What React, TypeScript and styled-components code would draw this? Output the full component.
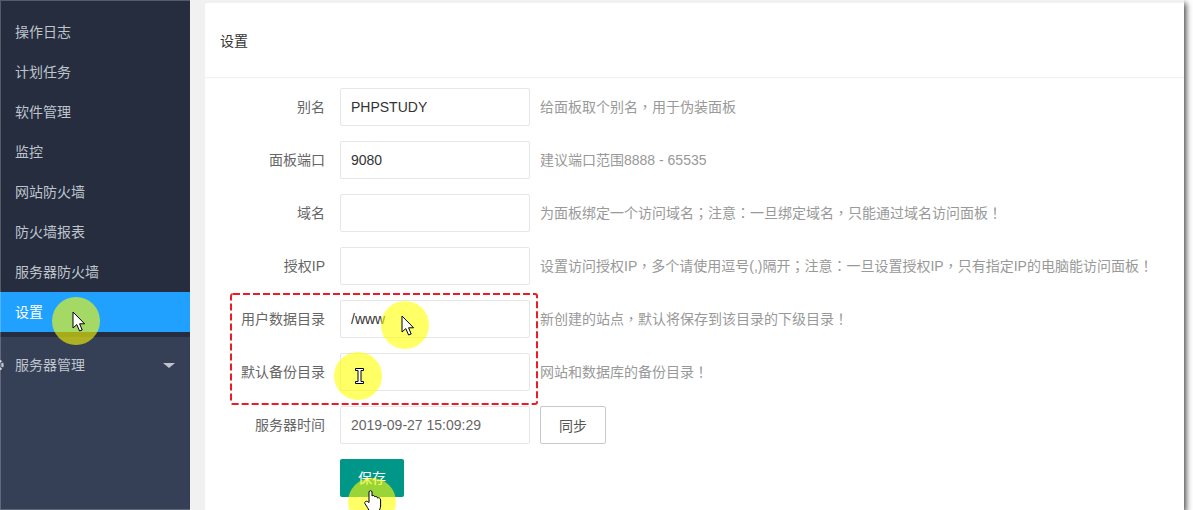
import React from "react";
import styled, { createGlobalStyle } from "styled-components";

const GlobalStyle = createGlobalStyle`
  html, body {
    margin: 0;
    padding: 0;
    background: #fff;
    overflow: hidden;
  }
  * { box-sizing: border-box; }
`;

const navItems = ["操作日志", "计划任务", "软件管理", "监控", "网站防火墙", "防火墙报表", "服务器防火墙"];

const rows = [
  { label: "别名", value: "PHPSTUDY", help: "给面板取个别名，用于伪装面板" },
  { label: "面板端口", value: "9080", help: "建议端口范围8888 - 65535" },
  { label: "域名", value: "", help: "为面板绑定一个访问域名；注意：一旦绑定域名，只能通过域名访问面板！" },
  { label: "授权IP", value: "", help: "设置访问授权IP，多个请使用逗号(,)隔开；注意：一旦设置授权IP，只有指定IP的电脑能访问面板！" },
  { label: "用户数据目录", value: "/www", help: "新创建的站点，默认将保存到该目录的下级目录！" },
  { label: "默认备份目录", value: "", help: "网站和数据库的备份目录！" },
];

// the reference centres its full-width punctuation, which the TC face does too
const renderHelp = (text: string) =>
  text.split(/([，；：！])/).map((part, i) =>
    i % 2 === 1 ? <Punct key={i}>{part}</Punct> : part
  );

const arrowPath = "M1 1 L1 17 L4.8 13.6 L7.6 20 L10.2 19 L7.6 12.8 L12.6 12.8 Z";

const App = () => {
  return (
    <>
      <GlobalStyle />
      <Viewport>
        <Frame>
          <Sidebar>
            <NavList>
              {navItems.map((item) => (
                <NavItem key={item}>{item}</NavItem>
              ))}
              <NavItem $active>设置</NavItem>
            </NavList>
            <SubMenu>
              <SubIcon viewBox="0 0 14 14">
                <circle cx="7" cy="7" r="4.5" fill="none" stroke="#bfc4cc" strokeWidth="2.4" strokeDasharray="2 1.2" />
              </SubIcon>
              <SubTitle>服务器管理</SubTitle>
              <Caret />
            </SubMenu>
          </Sidebar>
          <Content>
            <Card>
              <CardHeader>设置</CardHeader>
              <Form>
                {rows.map((row) => (
                  <Row key={row.label}>
                    <Label>{row.label}</Label>
                    <Input readOnly value={row.value} />
                    <Help>{renderHelp(row.help)}</Help>
                  </Row>
                ))}
                <Row>
                  <Label>服务器时间</Label>
                  <Input readOnly value="2019-09-27 15:09:29" $muted />
                  <SyncButton>同步</SyncButton>
                </Row>
                <Row>
                  <Label />
                  <SaveButton>保存</SaveButton>
                </Row>
              </Form>
            </Card>
          </Content>
        </Frame>

        <DashedBox width="309" height="113" viewBox="0 0 309 113">
          <rect x="1" y="1" width="306" height="110" rx="2" fill="none" stroke="#ed1c24" strokeWidth="2" strokeDasharray="7 3" />
        </DashedBox>

        <Spot $x={76} $y={321} />
        <Spot $x={405} $y={325} />
        <Spot $x={358} $y={376} />
        <Spot $x={372} $y={502} />

        <Cursor $x={72} $y={311} width="14" height="22" viewBox="0 0 14 22">
          <path d={arrowPath} fill="#fff" stroke="#000" strokeWidth="1" strokeLinejoin="round" />
        </Cursor>
        <Cursor $x={401} $y={315} width="14" height="22" viewBox="0 0 14 22">
          <path d={arrowPath} fill="#fff" stroke="#000" strokeWidth="1" strokeLinejoin="round" />
        </Cursor>
        <Cursor $x={354} $y={367} width="11" height="18" viewBox="0 0 11 18">
          <path d="M1.5 1.5 H9.5 V3.5 H7 V14.5 H9.5 V16.5 H1.5 V14.5 H4 V3.5 H1.5 Z" fill="#fff" stroke="#000" strokeWidth="1" />
        </Cursor>
        <Cursor $x={364} $y={490} width="18" height="20" viewBox="0 0 18 20">
          <path d="M5 10 V2 C5 .3 8 .3 8 2 V6 C9 5 10.5 5.5 10.8 6.8 C11.8 6 13.3 6.5 13.5 8 C14.6 7.4 16.6 8 16.6 10 V16 C16.6 18 15.5 20 14.5 22 H6 C4.5 19 2.5 16 .9 13.5 C.1 11.8 2.5 10 5 12.5 Z" fill="#fff" stroke="#000" strokeWidth="1" />
        </Cursor>
      </Viewport>
    </>
  );
};

export default App;

const Viewport = styled.div`
  position: relative;
  width: 1193px;
  height: 510px;
  overflow: hidden;
  background: #fff;
  font-family: "Liberation Sans", "Noto Sans CJK SC", sans-serif;
`;

const Frame = styled.div`
  display: flex;
  width: 1184px;
  height: 510px;
  background: #f1f1f1;
  box-shadow: 2px 3px 6px rgba(0, 0, 0, 0.75);
`;

const Sidebar = styled.aside`
  position: relative;
  display: flex;
  flex-direction: column;
  flex: none;
  width: 190px;
  background: #353f56;

  &::after {
    content: "";
    position: absolute;
    inset: 0;
    border: solid rgba(255, 255, 255, 0.22);
    border-width: 1px 0 1px 1px;
    pointer-events: none;
  }
`;

const NavList = styled.ul`
  list-style: none;
  margin: 0;
  padding: 12px 0 5px;
  background: #252d3f;
`;

const NavItem = styled.li<{ $active?: boolean }>`
  height: 40px;
  padding-left: 15px;
  line-height: 40px;
  font-size: 14px;
  color: ${({ $active }) => ($active ? "#fff" : "#bfc4cc")};
  background: ${({ $active }) => ($active ? "#20a0ff" : "transparent")};
`;

const SubMenu = styled.div`
  display: flex;
  align-items: center;
  height: 56px;
  margin-left: -9px;
  padding-right: 15px;
  font-size: 14px;
  color: #bfc4cc;
`;

const SubIcon = styled.svg`
  flex: none;
  width: 14px;
  height: 14px;
  margin-right: 10px;
`;

const SubTitle = styled.span`
  flex: 1;
  padding-bottom: 2px;
`;

const Caret = styled.i`
  width: 0;
  height: 0;
  border-left: 6px solid transparent;
  border-right: 6px solid transparent;
  border-top: 5px solid #bfc4cc;
`;

const Content = styled.main`
  flex: 1;
  min-width: 0;
  padding: 3px 0 0 15px;
`;

const Card = styled.section`
  height: 100%;
  background: #fff;
  border-radius: 2px 0 0 0;
`;

const CardHeader = styled.header`
  height: 75px;
  padding-left: 15px;
  line-height: 76px;
  font-size: 14px;
  color: #333;
  border-bottom: 1px solid #f1f1f1;
`;

const Form = styled.form`
  display: flex;
  flex-direction: column;
  gap: 15px;
  padding-top: 10px;
`;

const Row = styled.div`
  display: flex;
  align-items: center;
  height: 38px;
  font-size: 14px;
`;

const Label = styled.label`
  flex: none;
  width: 120px;
  padding-bottom: 2px;
  text-align: right;
  color: #666;
`;

const Input = styled.input<{ $muted?: boolean }>`
  flex: none;
  width: 190px;
  height: 38px;
  margin-left: 15px;
  padding: 0 10px;
  border: 1px solid #e6e6e6;
  border-radius: 2px;
  outline: none;
  font: inherit;
  color: ${({ $muted }) => ($muted ? "#666" : "#333")};
  background: #fff;
`;

const Help = styled.span`
  margin-left: 10px;
  padding-bottom: 2px;
  color: #999;
  white-space: nowrap;
`;

const Punct = styled.span`
  font-family: "Noto Sans CJK TC", sans-serif;
`;

const SyncButton = styled.button`
  width: 66px;
  height: 38px;
  margin-left: 10px;
  padding: 0;
  border: 1px solid #c9c9c9;
  border-radius: 2px;
  background: #fff;
  color: #555;
  font: inherit;
`;

const SaveButton = styled.button`
  width: 64px;
  height: 38px;
  margin-left: 15px;
  padding: 0 0 2px;
  border: none;
  border-radius: 2px;
  background: #009688;
  color: #fff;
  font: inherit;
`;

const DashedBox = styled.svg`
  position: absolute;
  left: 230px;
  top: 293px;
`;

const Spot = styled.div<{ $x: number; $y: number }>`
  position: absolute;
  left: ${({ $x }) => $x - 24}px;
  top: ${({ $y }) => $y - 24}px;
  width: 48px;
  height: 48px;
  border-radius: 50%;
  background: rgba(255, 255, 0, 0.6);
`;

const Cursor = styled.svg<{ $x: number; $y: number }>`
  position: absolute;
  left: ${({ $x }) => $x}px;
  top: ${({ $y }) => $y}px;
`;
